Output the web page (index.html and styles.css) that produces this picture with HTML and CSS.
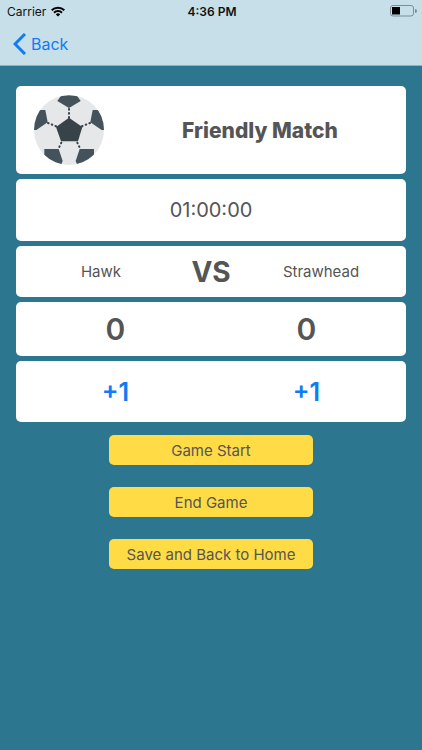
FILE: index.html
```html
<!DOCTYPE html>
<html lang="en">
<head>
  <meta charset="UTF-8" />
  <meta name="viewport" content="width=device-width, initial-scale=1.0" />
  <title>Friendly Match</title>
  <link rel="stylesheet" href="styles.css">
</head>
<body>
  <header>
    <div class="status-bar">
      <div class="carrier">
        <span>Carrier</span>
        <svg width="14" height="11" viewBox="0 0 14 11" fill="none" stroke="#000" stroke-width="2">
          <path d="M0.7 4.2a9 9 0 0 1 12.6 0" />
          <path d="M3 6.7a5.7 5.7 0 0 1 8 0" />
          <path d="M7 10.6L4.8 8.4a3.1 3.1 0 0 1 4.4 0z" fill="#000" stroke="none" />
        </svg>
      </div>
      <span class="clock">4:36 PM</span>
      <svg class="battery" width="27" height="12" viewBox="0 0 27 12">
        <rect x="0.5" y="0.5" width="23" height="10.5" rx="2.5" fill="none" stroke="#7f8d94" />
        <rect x="2" y="2" width="8" height="7.5" fill="#000" />
        <path d="M25 4v4a2 2 0 0 0 0-4z" fill="#7f8d94" />
      </svg>
    </div>
    <nav>
      <a href="#" class="back">
        <svg width="13" height="22" viewBox="0 0 13 22" fill="none" stroke="#0f7bf5" stroke-width="3">
          <path d="M12 1L2 11l10 10" />
        </svg>
        Back
      </a>
    </nav>
  </header>

  <main>
    <section class="card title-card">
      <svg class="ball" viewBox="0 0 210 210">
        <defs>
          <clipPath id="ballClip"><circle cx="105" cy="105" r="105" /></clipPath>
        </defs>
        <circle cx="105" cy="105" r="105" fill="#e6e7e9" />
        <g fill="#44535b" clip-path="url(#ballClip)">
          <path d="M70 18L80 4q25-6 50 0l10 14-35 21z" />
          <path d="M0 45h34l7 37-34 23H0z" />
          <path d="M210 45h-34l-7 37 34 23h7z" />
          <path d="M31 162h43l12 36-5 12H31z" />
          <path d="M180 162h-43l-12 36 5 12h50z" />
        </g>
        <path d="M105 68l40 28-13 43H81L66 96z" fill="#374249" />
        <g stroke="#374249" stroke-width="6" stroke-linecap="round" stroke-dasharray="2 10">
          <path d="M105 42v26" />
          <path d="M42 84l25 10" />
          <path d="M168 84l-25 10" />
          <path d="M82 143l-9 19" />
          <path d="M130 143l9 19" />
        </g>
      </svg>
      <h1>Friendly Match</h1>
    </section>

    <section class="card time-card" id="timer">01:00:00</section>

    <section class="card teams-card">
      <span>Hawk</span>
      <strong>VS</strong>
      <span>Strawhead</span>
    </section>

    <section class="card score-card">
      <span id="homeScore">0</span>
      <span id="awayScore">0</span>
    </section>

    <section class="card plus-card">
      <button type="button" aria-label="+1 Hawk">+1</button>
      <button type="button" aria-label="+1 Strawhead">+1</button>
    </section>

    <div class="actions">
      <button type="button">Game Start</button>
      <button type="button">End Game</button>
      <button type="button">Save and Back to Home</button>
    </div>
  </main>
</body>
</html>
```

FILE: styles.css
```css
* {
  box-sizing: border-box;
}
body {
  margin: 0;
  min-height: 100vh;
  background: #2c778f;
  color: #555;
  font-family: Inter, "Liberation Sans", sans-serif;
  font-size: 15px;
}
button {
  border: none;
  padding: 0;
  background: none;
  font-family: inherit;
  cursor: pointer;
}

/* top bar */
header {
  background: #c7dfe8;
  border-bottom: 1px solid #8fb0bd;
}
.status-bar {
  display: grid;
  grid-template-columns: 1fr auto 1fr;
  align-items: center;
  height: 22px;
  padding: 0 5px 0 7px;
  color: #111;
  font-size: 12px;
}
.carrier {
  display: flex;
  align-items: center;
  gap: 5px;
}
.clock {
  font-weight: 600;
}
.battery {
  justify-self: end;
}
nav {
  display: flex;
  align-items: center;
  height: 43px;
  padding: 0 13px;
}
.back {
  display: flex;
  align-items: center;
  gap: 5px;
  color: #0f7bf5;
  font-size: 16px;
  text-decoration: none;
}

/* match */
main {
  display: flex;
  flex-direction: column;
  gap: 5px;
  padding: 20px 16px;
}
.card {
  display: grid;
  align-items: center;
  justify-items: center;
  background: #fff;
  border-radius: 5px;
}
.title-card {
  grid-template-columns: 70px 1fr;
  gap: 10px;
  padding: 9px 0 9px 18px;
}
.ball {
  width: 70px;
  height: 70px;
}
h1 {
  margin: 0;
  font-size: 21px;
  font-weight: 800;
}
.time-card {
  min-height: 62px;
  font-size: 20px;
}
.teams-card {
  grid-template-columns: 1fr 50px 1fr;
  min-height: 51px;
}
.teams-card strong {
  font-size: 28px;
  font-weight: 700;
}
.score-card,
.plus-card {
  grid-template-columns: 1fr 1fr;
  padding: 0 4px;
  font-weight: 600;
}
.score-card {
  min-height: 54px;
  font-size: 30px;
}
.plus-card {
  min-height: 61px;
}
.plus-card button {
  color: #0f7bf5;
  font-size: 25px;
  font-weight: 600;
}

.actions {
  display: flex;
  flex-direction: column;
  align-items: center;
  gap: 22px;
  padding-top: 8px;
}
.actions button {
  width: 204px;
  height: 30px;
  border-radius: 5px;
  background: #ffdc46;
  color: #555;
  font-size: 15px;
}
```
